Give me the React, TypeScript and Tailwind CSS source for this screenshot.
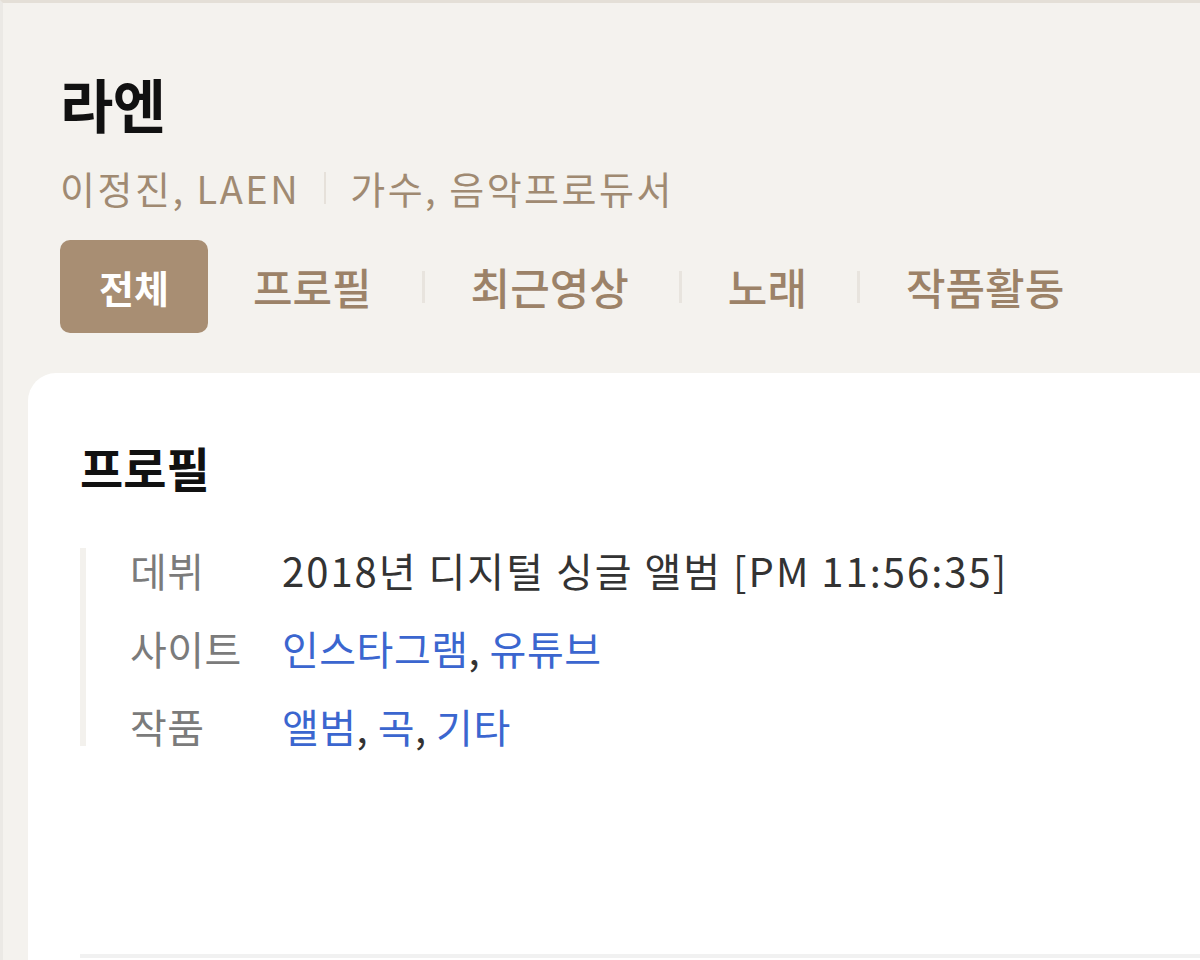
import React from 'react';

const TABS = ['프로필', '최근영상', '노래', '작품활동'];

const ROWS: { label: string; value: React.ReactNode }[] = [
  {
    label: '데뷔',
    value: <span className="tracking-[2px] text-[#333333]">2018년 디지털 싱글 앨범 [PM 11:56:35]</span>,
  },
  {
    label: '사이트',
    value: (
      <span className="text-[#333333]">
        <a className="text-[#3b66cf]">인스타그램</a>, <a className="text-[#3b66cf]">유튜브</a>
      </span>
    ),
  },
  {
    label: '작품',
    value: (
      <span className="text-[#333333]">
        <a className="text-[#3b66cf]">앨범</a>, <a className="text-[#3b66cf]">곡</a>,{' '}
        <a className="text-[#3b66cf]">기타</a>
      </span>
    ),
  },
];

export default function App() {
  return (
    <div
      className="h-[960px] overflow-hidden bg-[#f4f2ee] border-t-[3px] border-t-[#e4dfd7] border-l-[3px] border-l-[#ebe9e5]"
      style={{ fontFamily: '"Noto Sans CJK KR", "Noto Sans", sans-serif' }}
    >
      {/* header */}
      <div className="pl-[57px] pt-[68px]">
        <h1 className="text-[58px] font-bold leading-[64px] tracking-[-0.5px] text-[#111111]">라엔</h1>
        <div className="mt-[31px] flex items-center text-[38px] leading-[44px] tracking-[2.5px] text-[#a08a72]">
          <span>이정진, LAEN</span>
          <span className="mx-[24px] h-[32px] w-[2px] bg-[#e6e1da]" />
          <span>가수, 음악프로듀서</span>
        </div>
        <nav className="mt-[30px] flex items-center">
          <button className="h-[93px] rounded-[10px] bg-[#a88e73] px-[39px] text-[38px] font-bold text-white">
            전체
          </button>
          {TABS.map((t, i) => (
            <div key={t} className="flex items-center">
              {i > 0 && <span className="h-[32px] w-[3px] bg-[#e8e4de]" />}
              <span
                className={`${i === 0 ? 'ml-[45px]' : 'ml-[46px]'} mr-[50px] text-[43px] font-medium text-[#9c8268]`}
              >
                {t}
              </span>
            </div>
          ))}
        </nav>
      </div>

      {/* card */}
      <div className="ml-[25px] mt-[40px] h-[640px] rounded-tl-[28px] bg-white pl-[52px] pt-[66px]">
        <h2 className="text-[47px] font-bold leading-[56px] text-[#111111]">프로필</h2>
        <div className="mt-[53px] border-l-[6px] border-[#f3f1ed] pl-[44px]">
          {ROWS.map((r, i) => (
            <div
              key={r.label}
              className={`flex items-center text-[40px] leading-[40px] tracking-[0.5px] ${i > 0 ? 'mt-[38px]' : 'pt-[2px]'}`}
            >
              <span className="w-[152px] text-[#7b7b7b]">{r.label}</span>
              {r.value}
            </div>
          ))}
        </div>
        <div className="mt-[208px] border-t-[4px] border-[#f1f1f1]" />
      </div>
    </div>
  );
}
